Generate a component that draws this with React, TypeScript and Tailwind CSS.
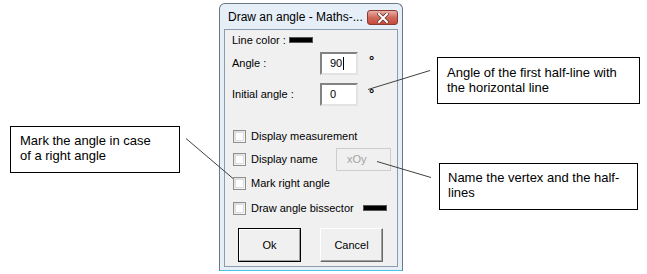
import React from 'react';

function CheckBox({ label }: { label: string }) {
  return (
    <div className="flex h-[14px] items-center">
      <span className="ml-[8px] h-[13px] w-[13px] border border-[#8e8f8f] bg-gradient-to-br from-[#dcdcdc] to-[#fbfbfb] p-[1px]">
        <span className="block h-full w-full border border-[#dedede] bg-white" />
      </span>
      <span className="ml-[5px]">{label}</span>
    </div>
  );
}

function NumberBox({ value, caret }: { value: string; caret?: boolean }) {
  return (
    <div className="flex h-[23px] w-[38px] items-center border-2 border-t-[#828282] border-l-[#828282] border-b-[#e3e3e3] border-r-[#e3e3e3] bg-white pl-[8px]">
      <span>{value}</span>
      {caret && <span className="ml-[1px] h-[13px] w-[1px] bg-black" />}
    </div>
  );
}

function Callout({ className, lines }: { className: string; lines: string[] }) {
  return (
    <div
      className={`absolute h-[47px] border border-black bg-white text-[13px] leading-[15px] text-black ${className}`}
      style={{ fontFamily: '"Liberation Sans", Arial, sans-serif' }}
    >
      {lines.map((l) => (
        <div key={l}>{l}</div>
      ))}
    </div>
  );
}

export default function App() {
  return (
    <div className="relative h-[274px] w-[647px] overflow-hidden bg-white">
      {/* dialog */}
      <div
        className="ml-[219px] mt-[3px] flex h-[268px] w-[184px] flex-col rounded-t-[6px] border border-[#6b7886] border-b-[#4fc3e6] bg-[#e6eff8] px-[4px] pb-[3px] text-[11px] text-black"
        style={{ fontFamily: '"Liberation Sans", Tahoma, sans-serif' }}
      >
        <div className="flex h-[25px] items-center justify-between">
          <span className="ml-[4px] text-[12px]">Draw an angle - Maths-...</span>
          <span className="relative mt-[2px] flex h-[15px] w-[31px] items-center justify-center rounded-[3px] border border-[#8a3a33] bg-gradient-to-b from-[#e8aea4] via-[#d06a5c] to-[#c54b3b]">
            <svg width="12" height="10" viewBox="0 0 12 10">
              <path d="M2 1 L10 9 M10 1 L2 9" stroke="#6a3530" strokeWidth="3.6" strokeLinecap="square" />
              <path d="M2 1 L10 9 M10 1 L2 9" stroke="#ffffff" strokeWidth="2" strokeLinecap="square" />
            </svg>
          </span>
        </div>
        <div className="flex flex-1 flex-col border border-[#8d9cac] bg-[#f0f0f0]">
          <div className="mt-[3px] flex h-[14px] items-center pl-[7px]">
            <span>Line color :</span>
            <span className="ml-[3px] h-[6px] w-[24px] border border-[#555] bg-black" />
          </div>
          <div className="mt-[5px] flex items-center pl-[7px]">
            <span className="w-[88px]">Angle :</span>
            <NumberBox value="90" caret />
            <span className="-mt-[6px] ml-[11px] text-[13px] font-bold">°</span>
          </div>
          <div className="mt-[8px] flex items-center pl-[7px]">
            <span className="w-[88px]">Initial angle :</span>
            <NumberBox value="0" />
            <span className="-mt-[2px] ml-[11px] text-[13px] font-bold">°</span>
          </div>
          <div className="mt-[23px]">
            <CheckBox label="Display measurement" />
          </div>
          <div className="mt-[5px] flex h-[23px] items-center">
            <div className="w-[111px]">
              <CheckBox label="Display name" />
            </div>
            <div className="flex h-[23px] w-[55px] items-center border border-[#cdcdcd] bg-[#f0f0f0] pl-[10px] text-[#a3a3a3]">
              xOy
            </div>
          </div>
          <div className="mt-[5px]">
            <CheckBox label="Mark right angle" />
          </div>
          <div className="mt-[11px] flex items-center">
            <CheckBox label="Draw angle bissector" />
            <span className="ml-[9px] h-[6px] w-[24px] border border-[#555] bg-black" />
          </div>
          <div className="mt-[13px] flex pl-[13px]">
            <button className="h-[34px] w-[63px] border border-black bg-[#f0f0f0]">
              <span className="flex h-full w-full items-center justify-center border border-b-[#a0a0a0] border-r-[#a0a0a0] border-t-white border-l-white">
                Ok
              </span>
            </button>
            <button className="ml-[19px] flex h-[34px] w-[63px] items-center justify-center border border-b-[#696969] border-r-[#696969] border-t-white border-l-white bg-[#f0f0f0] shadow-[inset_-1px_-1px_0_#a0a0a0]">
              Cancel
            </button>
          </div>
        </div>
      </div>

      {/* callouts */}
      <Callout className="left-[10px] top-[126px] w-[170px] pl-[9px] pt-[6px]" lines={['Mark the angle in case', 'of a right angle']} />
      <Callout className="left-[437px] top-[57px] w-[203px] pl-[9px] pt-[7px]" lines={['Angle of the first half-line with', 'the horizontal line']} />
      <Callout className="left-[439px] top-[163px] w-[199px] pl-[8px] pt-[6px]" lines={['Name the vertex and the half-', 'lines']} />

      <svg className="pointer-events-none absolute left-0 top-0" width="647" height="274">
        <line x1="186" y1="138.5" x2="233" y2="178.5" stroke="#404040" strokeWidth="1" />
        <line x1="368" y1="89.5" x2="430" y2="70.5" stroke="#404040" strokeWidth="1" />
        <line x1="377" y1="161.5" x2="431" y2="177.5" stroke="#404040" strokeWidth="1" />
      </svg>
    </div>
  );
}
